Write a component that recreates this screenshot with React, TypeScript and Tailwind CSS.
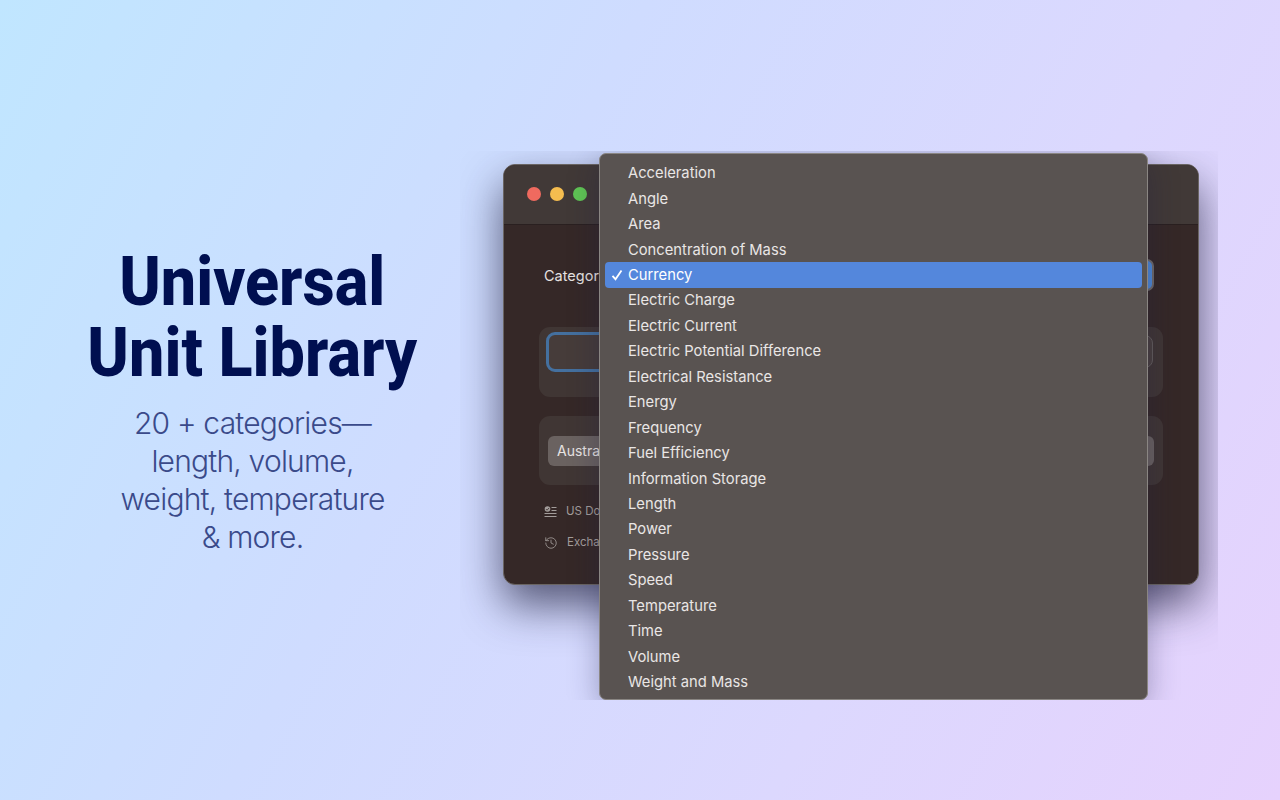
import { History } from "lucide-react";

const items = [
  "Acceleration", "Angle", "Area", "Concentration of Mass", "Currency", "Electric Charge", "Electric Current",
  "Electric Potential Difference", "Electrical Resistance", "Energy", "Frequency", "Fuel Efficiency",
  "Information Storage", "Length", "Power", "Pressure", "Speed", "Temperature", "Time", "Volume", "Weight and Mass",
];

function ListIcon() {
  return (
    <svg width="13" height="12" viewBox="0 0 13 12" fill="none" stroke="currentColor" strokeWidth="1">
      <circle cx="3.5" cy="3" r="2.8" fill="currentColor" stroke="none" />
      <path d="M2 3.1l1.1 1.1 2-2.3" stroke="#352827" strokeWidth="0.8" />
      <path d="M7.5 1.5h5M7.5 4.5h5M0.5 7.5h12M0.5 10.5h12" />
    </svg>
  );
}

export default function App() {
  return (
    <div className="flex h-[800px] w-[1280px] overflow-hidden bg-[linear-gradient(118deg,#c0e6ff_0%,#cfdcff_38%,#dcd8fe_70%,#e6d2fd_100%)] font-['Inter',sans-serif]">
      <div className="flex w-[460px] shrink-0 flex-col items-center pl-[45px] pt-[247px]">
        <h1 className="origin-center scale-x-[0.925] whitespace-nowrap text-center font-['Roboto',sans-serif] text-[68px] leading-[71px] font-extrabold text-[#000f50]">
          Universal
          <br />
          Unit Library
        </h1>
        <p className="mt-[15px] text-center text-[30px] leading-[38px] font-light tracking-[-0.8px] text-[#3a4a8a]">
          20 + categories—
          <br />
          length, volume,
          <br />
          weight, temperature
          <br />
          &amp; more.
        </p>
      </div>

      <div className="relative mt-[151px] h-[549px] w-[758px] shrink-0 overflow-hidden pl-[43px] pt-[13px]">
        <div className="flex h-[421px] w-[696px] flex-col overflow-hidden rounded-[12px] border border-[#6a6563] bg-[#352827] shadow-[0_20px_44px_rgba(30,30,60,0.7)]">
          <div className="flex h-[60px] shrink-0 items-center gap-[9px] border-b border-[#2a2020] bg-[#413937] pb-[1px] pl-[23px]">
            <span className="h-[14px] w-[14px] rounded-full bg-[#ef6a5f]" />
            <span className="h-[14px] w-[14px] rounded-full bg-[#f5bd4f]" />
            <span className="h-[14px] w-[14px] rounded-full bg-[#5fc454]" />
          </div>
          <div className="flex flex-col px-[35px] pt-[34px]">
            <div className="flex h-[32px] items-center justify-between pl-[5px]">
              <span className="pt-[1px] text-[14.5px] text-[#e6e2e1]">Category</span>
              <span className="mr-[9px] h-[32px] w-[300px] rounded-[7px] border-[2px] border-[#6f6b6a] bg-[#4f8ad8]" />
            </div>
            <div className="mt-[36px] flex h-[70px] items-start justify-between rounded-[11px] bg-[#403634] pl-[7px] pr-[10px] pt-[5px]">
              <div className="h-[40px] w-[300px] rounded-[9px] border-[3px] border-[#44709f] bg-[#463c3a]" />
              <div className="mt-[3px] h-[33px] w-[280px] rounded-[8px] border border-[#645d5b] bg-[#4a403e]" />
            </div>
            <div className="mt-[19px] flex h-[69px] items-center justify-between rounded-[11px] bg-[#403634] px-[9px]">
              <div className="flex h-[30px] w-[300px] items-center rounded-[6px] bg-[#6a6260] pl-[9px] text-[14px] text-[#e8e4e3]">
                Australian Dollar
              </div>
              <div className="h-[30px] w-[280px] rounded-[6px] bg-[#6a6260]" />
            </div>
            <div className="mt-[18px] flex items-center gap-[9px] pl-[5px] text-[11.5px] text-[#a39d9b]">
              <ListIcon />
              <span>US Dollar</span>
            </div>
            <div className="mt-[14px] flex items-center gap-[9px] pl-[5px] text-[11.5px] text-[#a39d9b]">
              <History size={14} strokeWidth={1.4} />
              <span>Exchange rates</span>
            </div>
          </div>
        </div>

        <div className="absolute left-[139px] top-[2px] h-[547px] w-[549px] rounded-[7px] border border-[#8a8683] bg-[#595351] px-[5px] pt-[6.6px] shadow-[0_8px_30px_rgba(30,30,70,0.35)]">
          {items.map((item) => {
            const on = item === "Currency";
            return (
              <div
                key={item}
                className={
                  on
                    ? "relative flex h-[25.45px] items-center rounded-[4px] bg-[#5487dc] pl-[23px] text-[14.75px] text-white"
                    : "flex h-[25.45px] items-center pl-[23px] text-[14.75px] text-[#e9e6e5]"
                }
              >
                {on && (
                  <svg className="absolute left-[6px] top-[7px]" width="12" height="12" viewBox="0 0 12 12" fill="none" stroke="white" strokeWidth="1.8">
                    <path d="M1.5 6.8l3 3.4L10.5 1.5" />
                  </svg>
                )}
                {item}
              </div>
            );
          })}
        </div>
      </div>
    </div>
  );
}
